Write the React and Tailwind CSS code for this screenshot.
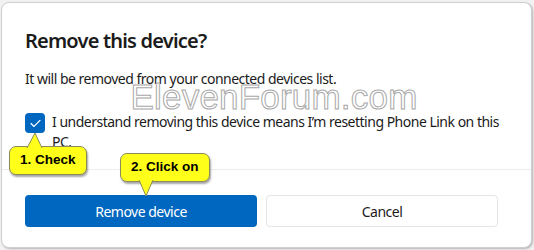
import React from "react";

function Callout({ label, className, tail }) {
    return (
        <div className={`absolute ${className}`}>
            <div className="relative rounded-[7px] border border-[#8a8a5a] bg-[#ffff1a] shadow-[1px_2px_2px_rgba(0,0,0,0.35)] px-[10px] h-[29px] flex items-center text-[13.5px] font-bold text-black font-['Liberation_Sans',Arial,sans-serif]">
                {label}
                {tail}
            </div>
        </div>
    );
}

export default function App() {
    return (
        <div className="w-[534px] h-[250px] bg-[#f2f2f2] pt-[2px] pl-[1px] overflow-hidden font-['Noto_Sans',sans-serif]">
            <div className="relative w-[531px] h-[246px] rounded-[8px] border border-[#cfcfcf] bg-white shadow-[1px_1px_2px_rgba(0,0,0,0.25)] flex flex-col">
                <div className="px-[23px] pt-[24px] h-[166px]">
                    <h1 className="text-[20px] leading-[28px] font-semibold text-[#1b1b1b] tracking-[-0.8px]">Remove this device?</h1>
                    <p className="mt-[14px] text-[14px] leading-[20px] text-[#1b1b1b] tracking-[-0.5px]">It will be removed from your connected devices list.</p>
                    <div className="h-[23px] flex justify-center items-start pl-[15px]">
                        <span className="-mt-[10px] font-['Liberation_Sans',Arial,sans-serif] text-[35px] leading-none text-white [-webkit-text-stroke:1px_#a8a8a8] tracking-[0.2px]">ElevenForum.com</span>
                    </div>
                    <div className="flex gap-[7px] items-start">
                        <div className="mt-[1px] w-[20px] h-[20px] shrink-0 rounded-[4px] bg-[#0067c0] flex items-center justify-center">
                            <svg width="11" height="9" viewBox="0 0 11 9" fill="none">
                                <path d="M1 4.6 L4 7.4 L10 1.4" stroke="white" strokeWidth="1.3" strokeLinecap="round" strokeLinejoin="round" />
                            </svg>
                        </div>
                        <p className="text-[14px] leading-[20px] text-[#1b1b1b] w-[452px] tracking-[-0.5px]">I understand removing this device means I’m resetting Phone Link on this PC.</p>
                    </div>
                </div>
                <div className="border-t border-[#ececec] flex-1 rounded-b-[8px] px-[23px] pt-[25px] flex gap-[9px]">
                    <button className="w-[232px] h-[32px] rounded-[4px] bg-[#0067c0] text-white text-[14px] tracking-[-0.5px]">Remove device</button>
                    <button className="w-[232px] h-[32px] rounded-[4px] border border-[#e5e5e5] bg-white text-[#1b1b1b] text-[14px] tracking-[-0.5px]">Cancel</button>
                </div>
                <Callout
                    label="1. Check"
                    className="left-[7px] top-[143px]"
                    tail={
                        <svg className="absolute left-[16px] top-[-15px]" width="18" height="16" viewBox="0 0 18 16">
                            <path d="M1 16 L9 1 L16 16" fill="#ffff1a" stroke="#8a8a5a" strokeWidth="1" />
                        </svg>
                    }
                />
                <Callout
                    label="2. Click on"
                    className="left-[118px] top-[150px]"
                    tail={
                        <svg className="absolute left-[16px] bottom-[-16px]" width="18" height="17" viewBox="0 0 18 17">
                            <path d="M2 0 L9 16 L16 0" fill="#ffff1a" stroke="#8a8a5a" strokeWidth="1" />
                        </svg>
                    }
                />
            </div>
        </div>
    );
}
